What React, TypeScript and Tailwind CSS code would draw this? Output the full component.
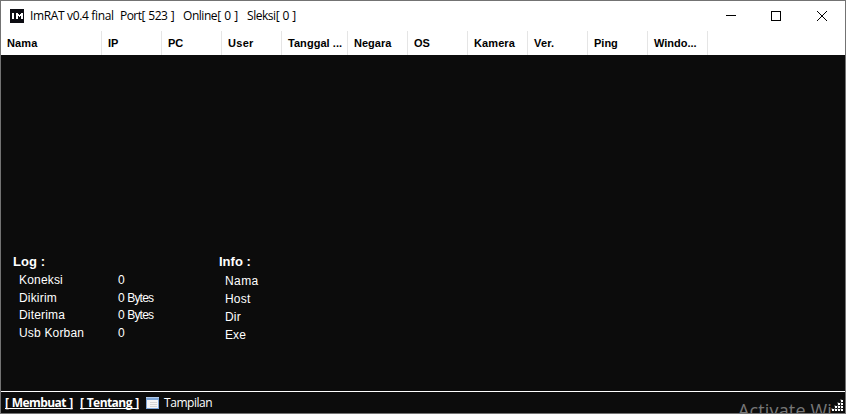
const columns = [
  { label: 'Nama', box: 'w-[101px] pl-[6px]', text: 'tracking-[0.1px]' },
  { label: 'IP', box: 'w-[60px] pl-[6px]', text: '' },
  { label: 'PC', box: 'w-[60px] pl-[6px]', text: '' },
  { label: 'User', box: 'w-[60px] pl-[6px]', text: 'tracking-[0.3px]' },
  { label: 'Tanggal ...', box: 'w-[66px] pl-[6px]', text: 'tracking-[0.05px]' },
  { label: 'Negara', box: 'w-[60px] pl-[6px]', text: '' },
  { label: 'OS', box: 'w-[60px] pl-[6px]', text: '' },
  { label: 'Kamera', box: 'w-[60px] pl-[6px]', text: 'tracking-[0.1px]' },
  { label: 'Ver.', box: 'w-[60px] pl-[6px]', text: 'tracking-[0.2px]' },
  { label: 'Ping', box: 'w-[60px] pl-[6px]', text: '' },
  { label: 'Windo...', box: 'w-[60px] pl-[6px]', text: '' },
];

const log = [
  { label: 'Koneksi', value: '0', row: 'h-[18px]' },
  { label: 'Dikirim', value: '0 Bytes', row: 'h-[17px]' },
  { label: 'Diterima', value: '0 Bytes', row: 'h-[18px]' },
  { label: 'Usb Korban', value: '0', row: 'h-[18px]' },
];

const info = [
  { label: 'Nama', text: 'tracking-[0.4px]' },
  { label: 'Host', text: 'tracking-[0.2px]' },
  { label: 'Dir', text: 'tracking-[0.2px]' },
  { label: 'Exe', text: 'tracking-[0.1px]' },
];

const gripDots = [
  [9, 0], [6, 3], [9, 3], [3, 6], [6, 6], [9, 6], [0, 9], [3, 9], [6, 9], [9, 9],
];

function TitleBar() {
  return (
    <header className="flex h-[30px] items-center bg-white pl-[9px] text-black">
      <svg width="14" height="14" viewBox="0 0 14 14" shapeRendering="crispEdges">
        <rect width="14" height="14" fill="#0c0c12" />
        <path d="M2 4h2v6H2zM6 4h2v6H6zM11 4h2v6h-2zM8 5h1v2H8zM10 5h1v2h-1zM9 6h1v2H9z" fill="#fff" />
      </svg>
      <div className="ml-[6px] flex font-['Open_Sans',sans-serif] text-[12px] leading-[18px] whitespace-pre">
        <span className="w-[90px] tracking-[-0.35px]">ImRAT v0.4 final</span>
        <span className="w-[63px] tracking-[-0.55px] [word-spacing:1px]">Port[ 523 ]</span>
        <span className="w-[64px] tracking-[-0.45px] [word-spacing:0.9px]">Online[ 0 ]</span>
        <span className="tracking-[-0.45px] [word-spacing:0.7px]">Sleksi[ 0 ]</span>
      </div>
      <svg className="mr-[17px] ml-auto" width="103" height="12" viewBox="0 0 103 12" fill="none" stroke="#000">
        <path d="M1 5.5h10" shapeRendering="crispEdges" />
        <rect x="46.5" y="1.5" width="9" height="9" shapeRendering="crispEdges" />
        <path d="M92 1l10 10M102 1L92 11" strokeWidth="1" />
      </svg>
    </header>
  );
}

function ColumnHeader() {
  return (
    <div className="flex h-[24px] bg-white font-['Liberation_Sans',Arial,sans-serif] text-[11px] leading-[24px] font-bold whitespace-pre text-black">
      {columns.map((c) => (
        <div key={c.label} className={`${c.box} shrink-0 border-r border-[#e5e5e5]`}>
          <span className={c.text}>{c.label}</span>
        </div>
      ))}
    </div>
  );
}

function LogPanel() {
  return (
    <section className="w-[206px]">
      <h2 className="h-[18px] text-[13px] leading-[18px] font-bold tracking-[0.1px]">Log :</h2>
      {log.map((r) => (
        <div key={r.label} className={`${r.row} flex pl-[6px] leading-[18px]`}>
          <span className="w-[99px] tracking-[0.18px]">{r.label}</span>
          <span className="tracking-[-0.8px] [word-spacing:0.8px]">{r.value}</span>
        </div>
      ))}
    </section>
  );
}

function InfoPanel() {
  return (
    <section>
      <h2 className="h-[19px] text-[13px] leading-[18px] font-bold">Info :</h2>
      {info.map((r) => (
        <div key={r.label} className={`${r.text} h-[18px] pl-[6px] leading-[18px]`}>{r.label}</div>
      ))}
    </section>
  );
}

function StatusBar() {
  return (
    <footer className="relative flex h-[22px] items-center overflow-hidden border-t border-white pl-[4px] font-['Open_Sans',sans-serif] text-[12px] whitespace-pre">
      <span className="w-[75px] font-bold tracking-[-0.55px] underline [text-decoration-skip-ink:none] [word-spacing:0.7px]">[ Membuat ]</span>
      <span className="w-[65px] font-bold tracking-[-0.55px] underline [text-decoration-skip-ink:none] [word-spacing:0.7px]">[ Tentang ]</span>
      <svg className="mt-px" width="15" height="15" viewBox="0 0 15 15" shapeRendering="crispEdges">
        <rect x="1" y="1" width="13" height="12" fill="#7ea6d8" />
        <rect x="1" y="1" width="13" height="1" fill="#b1cbed" />
        <rect x="2" y="4" width="11" height="8" fill="#f5f5f5" />
        <path d="M5 6h7v1H5zM5 8h7v1H5zM5 10h7v1H5z" fill="#d5d5d5" />
      </svg>
      <span className="ml-[4px] tracking-[-0.45px]">Tampilan</span>
      <span className="absolute top-[6px] left-[737px] text-[18px] leading-[25px] tracking-[0.15px] text-[#767676]">Activate Wi</span>
      <svg className="absolute right-0 bottom-0" width="14" height="14" viewBox="-1 -1 14 14" shapeRendering="crispEdges">
        {gripDots.map(([x, y]) => (
          <g key={`${x}-${y}`}>
            <rect x={x - 1} y={y - 1} width="2" height="2" fill="#404040" />
            <rect x={x} y={y} width="2" height="2" fill="#fff" />
          </g>
        ))}
      </svg>
    </footer>
  );
}

export default function App() {
  return (
    <div className="flex h-[414px] w-[846px] flex-col overflow-hidden border border-[#737373] bg-[#0c0c0c] text-white">
      <TitleBar />
      <ColumnHeader />
      <main className="flex flex-1 items-start pt-[198px] pl-[12px] font-['Liberation_Sans',Arial,sans-serif] text-[12px] whitespace-pre">
        <LogPanel />
        <InfoPanel />
      </main>
      <StatusBar />
    </div>
  );
}
